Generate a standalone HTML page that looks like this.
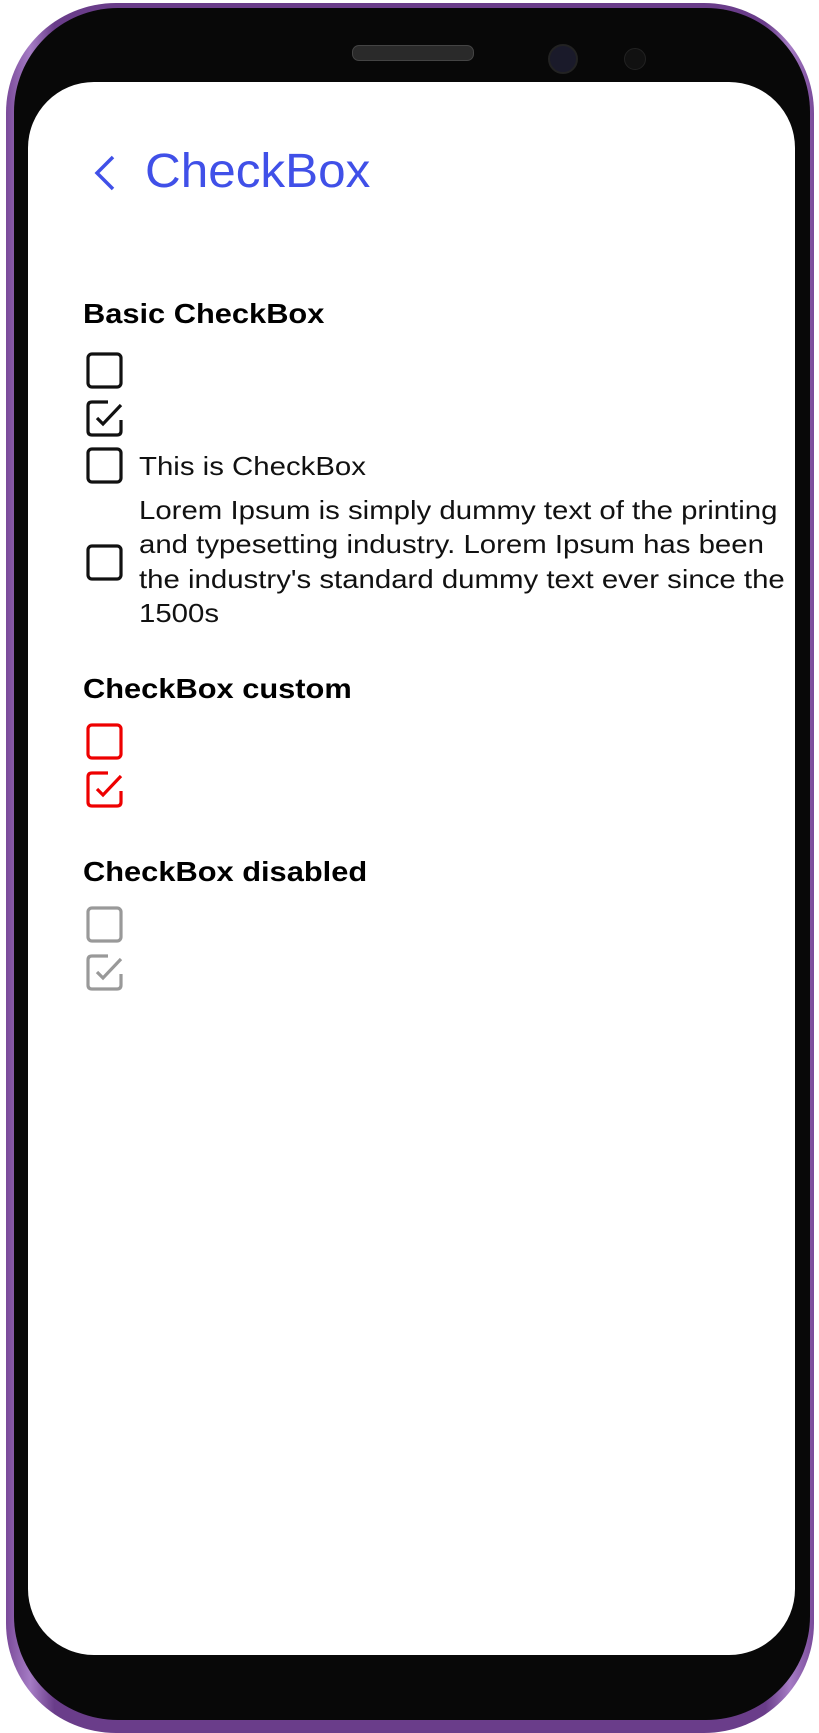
<!DOCTYPE html>
<html><head><meta charset="utf-8"><style>
html,body{margin:0;padding:0;width:819px;height:1730px;overflow:hidden;background:#fff;font-family:"Liberation Sans",sans-serif;}
.phone{position:absolute;left:6px;top:3px;width:808px;height:1730px;border-radius:110px;background:linear-gradient(90deg,#7a4a9a,#a57cc4 3%,#6a3d8a 6%,#6a3d8a 94%,#a57cc4 97%,#7a4a9a);}
.bezel{position:absolute;left:14px;top:8px;width:796px;height:1712px;border-radius:104px;background:#080808;}
.screen{position:absolute;left:28px;top:82px;width:767px;height:1573px;border-radius:66px;background:#fff;overflow:hidden;}
.speaker{position:absolute;left:352px;top:45px;width:120px;height:14px;border-radius:7px;background:#2a2a2a;border:1px solid #444;}
.cam{position:absolute;left:548px;top:44px;width:26px;height:26px;border-radius:50%;background:#1a1a2a;border:2px solid #222;}
.cam2{position:absolute;left:624px;top:48px;width:20px;height:20px;border-radius:50%;background:#111;border:1px solid #222;}
.a{position:absolute;white-space:nowrap;}
h2{position:absolute;margin:0;font-size:28px;font-weight:bold;color:#000;left:55px;transform:scaleX(1.1);transform-origin:0 0;white-space:nowrap;}
.t{font-size:26px;color:#111;transform:scaleX(1.13);transform-origin:0 0;}
svg.cb{position:absolute;left:58px;}
</style></head><body>
<div class="phone"></div>
<div class="bezel"></div>
<div class="speaker"></div><div class="cam"></div><div class="cam2"></div>
<div class="screen">
<svg class="a" style="left:64px;top:73px" width="26" height="36" viewBox="0 0 26 36"><path d="M21 2 L5 18 L21 34" fill="none" stroke="#4050e8" stroke-width="3.5"/></svg>
<div class="a" style="left:117px;top:62px;font-size:48px;color:#4050e8;transform:scaleX(1.03);transform-origin:0 0">CheckBox</div>
<h2 style="top:216px">Basic CheckBox</h2>
<svg class="cb" style="top:270px" width="38" height="38" viewBox="0 0 38 38"><rect x="2" y="2" width="33" height="33" rx="4" fill="none" stroke="#111" stroke-width="3.2"/></svg>
<svg class="cb" style="top:318px" width="38" height="38" viewBox="0 0 38 38"><path d="M22 2 H6 Q2 2 2 6 V31 Q2 35 6 35 H31 Q35 35 35 31 V20" fill="none" stroke="#111" stroke-width="3.2"/><path d="M11 18 L17 24 L35 5" fill="none" stroke="#111" stroke-width="3.2"/></svg>
<svg class="cb" style="top:365px" width="38" height="38" viewBox="0 0 38 38"><rect x="2" y="2" width="33" height="33" rx="4" fill="none" stroke="#111" stroke-width="3.2"/></svg>
<div class="a t" style="left:111px;top:369px">This is CheckBox</div>
<svg class="cb" style="top:462px" width="38" height="38" viewBox="0 0 38 38"><rect x="2" y="2" width="33" height="33" rx="4" fill="none" stroke="#111" stroke-width="3.2"/></svg>
<div class="a t" style="left:111px;top:411px;line-height:34.3px">Lorem Ipsum is simply dummy text of the printing<br>and typesetting industry. Lorem Ipsum has been<br>the industry's standard dummy text ever since the<br>1500s</div>
<h2 style="top:591px">CheckBox custom</h2>
<svg class="cb" style="top:641px" width="38" height="38" viewBox="0 0 38 38"><rect x="2" y="2" width="33" height="33" rx="4" fill="none" stroke="#ee0000" stroke-width="3.2"/></svg>
<svg class="cb" style="top:689px" width="38" height="38" viewBox="0 0 38 38"><path d="M22 2 H6 Q2 2 2 6 V31 Q2 35 6 35 H31 Q35 35 35 31 V20" fill="none" stroke="#ee0000" stroke-width="3.2"/><path d="M11 18 L17 24 L35 5" fill="none" stroke="#ee0000" stroke-width="3.2"/></svg>
<h2 style="top:774px">CheckBox disabled</h2>
<svg class="cb" style="top:824px" width="38" height="38" viewBox="0 0 38 38"><rect x="2" y="2" width="33" height="33" rx="4" fill="none" stroke="#999" stroke-width="3.2"/></svg>
<svg class="cb" style="top:872px" width="38" height="38" viewBox="0 0 38 38"><path d="M22 2 H6 Q2 2 2 6 V31 Q2 35 6 35 H31 Q35 35 35 31 V20" fill="none" stroke="#999" stroke-width="3.2"/><path d="M11 18 L17 24 L35 5" fill="none" stroke="#999" stroke-width="3.2"/></svg>
</div>
</body></html>
